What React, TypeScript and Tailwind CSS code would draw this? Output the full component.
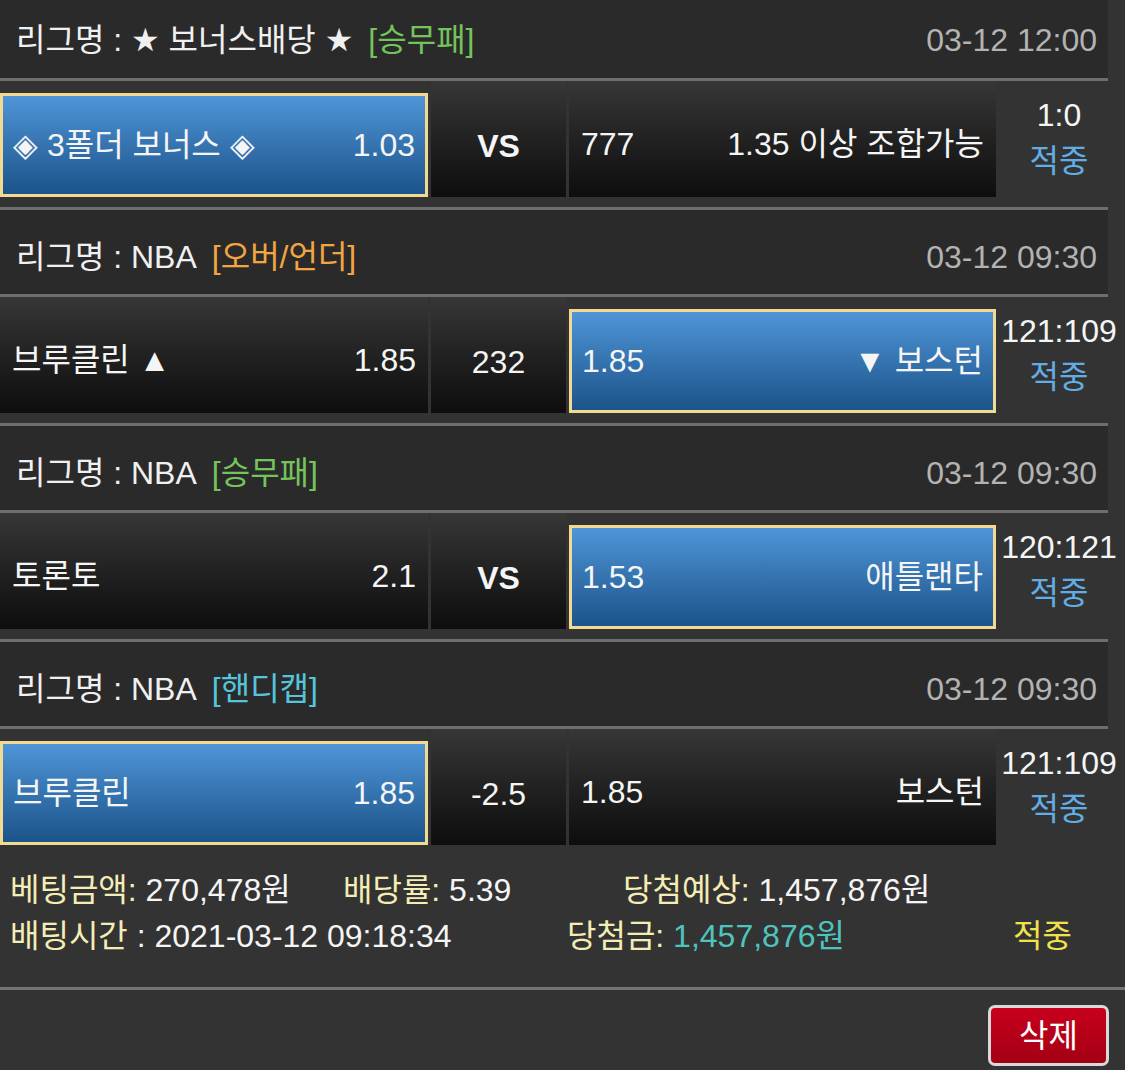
type Side = 'home' | 'away'

type Match = {
  league: string
  starred?: boolean
  market: string
  marketColor: string
  time: string
  home: string
  homeOdds: string
  middle: string
  middleBold?: boolean
  away: string
  awayOdds: string
  pick: Side
  score: string
}

const matches: Match[] = [
  {
    league: '보너스배당',
    starred: true,
    market: '[승무패]',
    marketColor: 'text-[#74c35b]',
    time: '03-12 12:00',
    home: '◈ 3폴더 보너스 ◈',
    homeOdds: '1.03',
    middle: 'VS',
    middleBold: true,
    away: '1.35 이상 조합가능',
    awayOdds: '777',
    pick: 'home',
    score: '1:0',
  },
  {
    league: 'NBA',
    market: '[오버/언더]',
    marketColor: 'text-[#f3a542]',
    time: '03-12 09:30',
    home: '브루클린 ▲',
    homeOdds: '1.85',
    middle: '232',
    away: '▼ 보스턴',
    awayOdds: '1.85',
    pick: 'away',
    score: '121:109',
  },
  {
    league: 'NBA',
    market: '[승무패]',
    marketColor: 'text-[#74c35b]',
    time: '03-12 09:30',
    home: '토론토',
    homeOdds: '2.1',
    middle: 'VS',
    middleBold: true,
    away: '애틀랜타',
    awayOdds: '1.53',
    pick: 'away',
    score: '120:121',
  },
  {
    league: 'NBA',
    market: '[핸디캡]',
    marketColor: 'text-[#55c5dc]',
    time: '03-12 09:30',
    home: '브루클린',
    homeOdds: '1.85',
    middle: '-2.5',
    away: '보스턴',
    awayOdds: '1.85',
    pick: 'home',
    score: '121:109',
  },
]

const starFont = { fontFamily: '"DejaVu Sans", sans-serif' }

function Cell({
  selected,
  width,
  children,
}: {
  selected: boolean
  width: string
  children: React.ReactNode
}) {
  if (selected) {
    return (
      <div
        className={`${width} mt-[12px] flex h-[104px] shrink-0 items-center justify-between border-[3px] border-[#f2da93] bg-linear-to-b from-[#4f95d8] to-[#1c548a] px-[10px]`}
      >
        {children}
      </div>
    )
  }

  return (
    <div
      className={`${width} flex h-[116px] shrink-0 items-center justify-between bg-linear-to-b from-[#373737] to-[#0e0e0e] px-[12px] pt-[10px]`}
    >
      {children}
    </div>
  )
}

function MatchBlock({ match, first }: { match: Match; first: boolean }) {
  return (
    <section>
      <header
        className={`flex w-[1108px] items-center justify-between border-y-[3px] border-[#6e6e6e] bg-[#2a2a2a] pl-[16px] pr-[11px] ${
          first ? 'h-[81px] border-t-0 pt-[2px]' : 'h-[90px] pt-[10px]'
        }`}
      >
        <p className="text-[#f0f0f0]">
          리그명 :{' '}
          {match.starred ? (
            <>
              <span style={starFont}>★</span> {match.league}{' '}
              <span style={starFont}>★</span>
            </>
          ) : (
            match.league
          )}
          <span className={`ml-[15px] ${match.marketColor}`}>
            {match.market}
          </span>
        </p>
        <p className="text-[#b3b3b3]">{match.time}</p>
      </header>

      <div className="flex h-[126px] items-start gap-[3px]">
        <Cell selected={match.pick === 'home'} width="w-[428px]">
          <span>{match.home}</span>
          <span>{match.homeOdds}</span>
        </Cell>
        <div className="flex h-[116px] w-[135px] shrink-0 items-center justify-center bg-linear-to-b from-[#373737] to-[#0e0e0e] pt-[14px]">
          <span className={match.middleBold ? 'font-bold' : ''}>
            {match.middle}
          </span>
        </div>
        <Cell selected={match.pick === 'away'} width="w-[427px]">
          <span>{match.awayOdds}</span>
          <span>{match.away}</span>
        </Cell>
        <div className="-ml-[3px] flex h-[116px] w-[126px] shrink-0 flex-col items-center justify-center pb-[3px] leading-[46px]">
          <span>{match.score}</span>
          <span className="text-[#62ade6]">적중</span>
        </div>
      </div>
    </section>
  )
}

export default function App() {
  return (
    <main
      className="min-h-[1070px] w-[1125px] overflow-hidden bg-[#333333] text-[32px] text-[#f5f5f5]"
      style={{ fontFamily: '"Liberation Sans", "Noto Sans CJK KR", sans-serif' }}
    >
      {matches.map((match, index) => (
        <MatchBlock key={index} match={match} first={index === 0} />
      ))}

      <div className="pb-[28px] pl-[10px] pt-[12px] leading-[46px]">
        <div className="flex">
          <p className="w-[333px]">
            <span className="text-[#f4edb6]">베팅금액:</span> 270,478원
          </p>
          <p className="w-[280px]">
            <span className="text-[#f4edb6]">배당률:</span> 5.39
          </p>
          <p>
            <span className="text-[#f4edb6]">당첨예상:</span> 1,457,876원
          </p>
        </div>
        <div className="flex">
          <p className="w-[557px]">
            <span className="text-[#f4edb6]">배팅시간</span> : 2021-03-12
            09:18:34
          </p>
          <p className="w-[446px]">
            <span className="text-[#f4edb6]">당첨금:</span>{' '}
            <span className="text-[#4fc4be]">1,457,876원</span>
          </p>
          <p className="text-[#f1e24c]">적중</p>
        </div>
      </div>

      <div className="flex justify-end border-t-[3px] border-[#747474] pr-[16px] pt-[15px]">
        <button
          type="button"
          className="flex h-[61px] w-[121px] items-center justify-center rounded-[7px] border-[3px] border-[#d9d9d9] bg-linear-to-b from-[#c8001e] to-[#a30013] text-[32px] text-white"
        >
          삭제
        </button>
      </div>
    </main>
  )
}
